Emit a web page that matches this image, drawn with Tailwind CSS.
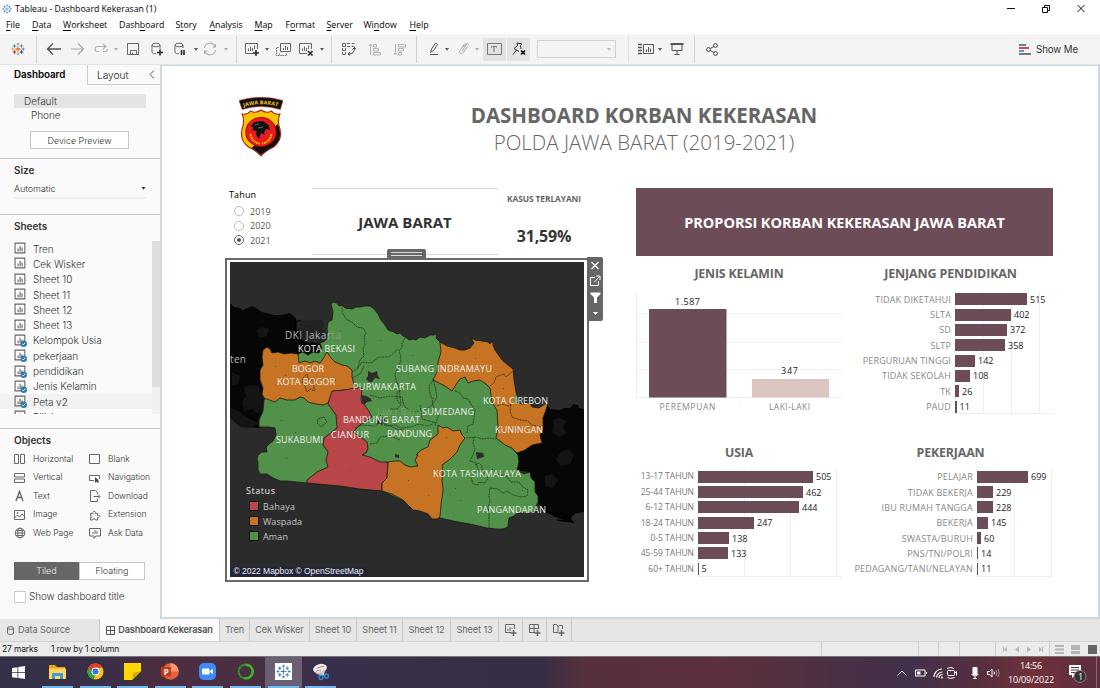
<!DOCTYPE html>
<html lang="id">
<head>
<meta charset="utf-8">
<title>Tableau - Dashboard Kekerasan (1)</title>
<script src="https://cdn.jsdelivr.net/npm/@tailwindcss/browser@4"></script>
</head>
<body class="w-[1100px] h-[688px] overflow-hidden bg-white font-['Open_Sans',sans-serif] text-[9px] leading-none text-black">
<svg width="0" height="0" class="hidden">
  <defs>
    <symbol id="sheet" viewBox="0 0 12 12"><path d="M1 1h9v9h-9zM3.800 8.500V6M5.600 8.500V3.500M7.400 8.500V5" fill="none" stroke="#666"/></symbol>
    <symbol id="sheetok" viewBox="0 0 12 12"><path d="M1 1h9v9h-9zM3.800 8.500V6M5.600 8.500V3.500M7.400 8.500V5" fill="none" stroke="#666"/><circle cx="9" cy="9" r="3" fill="#2f7ea3"/><path d="M7.500 9l1 1 2-2" fill="none" stroke="#fff" stroke-width=".8"/></symbol>
    <symbol id="caret" viewBox="0 0 4 3"><path d="M0 0h4L2 2.800z" fill="currentColor"/></symbol>
    <symbol id="tab" viewBox="0 0 16 16"><g fill="none"><path d="M8 5v6M5 8h6" stroke="#e8762c" stroke-width="1.500"/><path d="M4 2.500v4M2 4.500h4" stroke="#5b879b" stroke-width="1.200"/><path d="M12 2.500v4M10 4.500h4" stroke="#59879b"/><path d="M4 9.500v4M2 11.500h4" stroke="#c72035" stroke-width="1.200"/><path d="M12 9.500v4M10 11.500h4" stroke="#1f457e" stroke-width="1.200"/><path d="M8 .8v3M6.500 2.300h3" stroke="#7199a6"/><path d="M8 12.200v3M6.500 13.700h3" stroke="#7199a6"/><path d="M2 6.500v3M.5 8h3" stroke="#eb912c"/><path d="M14 6.500v3M12.500 8h3" stroke="#5c6692"/></g></symbol>
    <symbol id="tabblue" viewBox="0 0 16 16"><path d="M8 5v6M5 8h6M4 2.500v4M2 4.500h4M12 2.500v4M10 4.500h4M4 9.500v4M2 11.500h4M12 9.500v4M10 11.500h4M8 .8v3M6.500 2.300h3M8 12.200v3M6.500 13.700h3M2 6.500v3M.5 8h3M14 6.500v3M12.500 8h3" fill="none" stroke="#3f7fae"/></symbol>
  </defs>
</svg>

<!-- title bar -->
<header class="flex h-[18px] items-center pl-[2px]">
  <svg class="size-[10px]"><use href="#tabblue"/></svg>
  <span class="ml-[3px] text-[8.700px]">Tableau - Dashboard Kekerasan (1)</span>
  <svg class="ml-auto mr-[11px] h-[12px] w-[84px]" viewBox="0 0 84 12" fill="none" stroke="#111"><path d="M2 5.500h8"/><path d="M37.500 4.500h5v5h-5zM39.500 4.500v-2h5v5h-2M72.500 2l7 7M79.500 2l-7 7"/></svg>
</header>

<!-- menus -->
<nav class="flex h-[16px] pt-[3px] text-[8.800px] [&_u]:underline-offset-[1.500px]">
  <span class="ml-[6px] w-[26px]"><u>F</u>ile</span><span class="w-[31px]"><u>D</u>ata</span><span class="w-[56px]"><u>W</u>orksheet</span><span class="w-[56.500px]">Dash<u>b</u>oard</span><span class="w-[34px]">S<u>t</u>ory</span><span class="w-[45px]"><u>A</u>nalysis</span><span class="w-[31px]"><u>M</u>ap</span><span class="w-[41px]">F<u>o</u>rmat</span><span class="w-[37px]"><u>S</u>erver</span><span class="w-[46px]">Wi<u>n</u>dow</span><span><u>H</u>elp</span>
</nav>

<!-- toolbar -->
<div class="flex h-[31px] items-center border-b border-[#dfe4e8] bg-[#f4f4f4] text-[#555]">
  <svg class="ml-[11px] size-[14px] shrink-0"><use href="#tab"/></svg>
  <i class="ml-[11px] h-[27px] w-px bg-[#d0d0d0]"></i>
  <svg class="ml-[9px] h-[14px] w-[16px]" viewBox="0 0 16 14" fill="none" stroke="#555" stroke-width="1.300"><path d="M15 7H1.500M7 1.500L1.500 7 7 12.500"/></svg>
  <svg class="ml-[8px] h-[14px] w-[16px]" viewBox="0 0 16 14" fill="none" stroke="#aaa" stroke-width="1.200"><path d="M1 7h12.500M8 1.500L13.500 7 8 12.500"/></svg>
  <svg class="ml-[8px] h-[12px] w-[15px]" viewBox="0 0 15 12" fill="none" stroke="#b0b0b0" stroke-width="1.100"><path d="M5 8.500H3.500a2.500 2.500 0 010-5H11M9 1l3 2.500L9 6M9 8.500h2a2.500 2.500 0 002.500-2.500"/></svg>
  <svg class="ml-[5px] h-[3px] w-[4px] text-[#aaa]"><use href="#caret"/></svg>
  <svg class="ml-[8px] size-[14px]" viewBox="0 0 14 14" fill="none" stroke="#666"><path d="M1.500 1.500h11v11h-11zM4.500 12V8.500h6V12M6.500 10.500V12"/></svg>
  <svg class="ml-[10px] size-[14px]" viewBox="0 0 14 14" fill="none" stroke="#666"><ellipse cx="6" cy="3" rx="4" ry="1.800"/><path d="M2 3v7c0 1.200 2 1.800 4 1.800M10 3v4"/><path d="M10 7.500v6M7 10.500h6" stroke="#222" stroke-width="1.500"/></svg>
  <svg class="ml-[9px] size-[14px]" viewBox="0 0 14 14" fill="none" stroke="#666"><ellipse cx="6" cy="3" rx="4" ry="1.800"/><path d="M2 3v7c0 1.200 2 1.800 4 1.800M10 3v3"/><path d="M8.500 8v5M11 8v5" stroke="#222" stroke-width="1.600"/></svg>
  <svg class="ml-[7px] h-[3px] w-[4px]"><use href="#caret"/></svg>
  <svg class="ml-[5px] size-[14px]" viewBox="0 0 14 14" fill="none" stroke="#b0b0b0" stroke-width="1.100"><path d="M1.500 6A5.500 5.500 0 0112 4.500M12.500 8A5.500 5.500 0 012 9.500M12.500 2v3h-3M1.500 12V9h3"/></svg>
  <svg class="ml-[7px] h-[3px] w-[4px] text-[#aaa]"><use href="#caret"/></svg>
  <i class="ml-[8px] h-[27px] w-px bg-[#d0d0d0]"></i>
  <svg class="ml-[8px] size-[14px]" viewBox="0 0 14 14" fill="none" stroke="#666"><path d="M12.500 7V1.500h-12v10H8M3.500 9V6.500M5.500 9V4.500M7.500 9V6M9.500 7V3.500"/><path d="M11 8v6M8 11h6" stroke="#222" stroke-width="1.500"/></svg>
  <svg class="ml-[6px] h-[3px] w-[4px]"><use href="#caret"/></svg>
  <svg class="ml-[7px] size-[15px]" viewBox="0 0 15 15" fill="none" stroke="#666"><path d="M4.500 1.500h10v8h-10zM7.500 8V6M9.500 8V4M11.500 8V5"/><path d="M2.500 5.500h-2v8h10v-2M3.500 11.500v1" stroke-dasharray="1.500 .8"/></svg>
  <svg class="ml-[8px] size-[15px]" viewBox="0 0 15 15" fill="none" stroke="#666"><path d="M12.500 7V1.500h-12v10H8M3.500 9V6.500M5.500 9V4.500M7.500 9V6M9.500 7V3.500"/><path d="M9 9l4.500 4.500M13.500 9L9 13.500" stroke="#222" stroke-width="1.500"/></svg>
  <svg class="ml-[6px] h-[3px] w-[4px]"><use href="#caret"/></svg>
  <i class="ml-[7px] h-[27px] w-px bg-[#d0d0d0]"></i>
  <svg class="ml-[10px] size-[14px]" viewBox="0 0 14 14" fill="none" stroke="#666"><path d="M.5 1.500h3v3h-3zM5 1.500h3M9.500 1.500h3M5 4.500h3M9.500 4.500h3M.5 6v2.500h3V6M.5 10v2.500h3V10"/><path d="M12.500 6c0 4-2 6-6 6M10.500 7.500l2-2 1.500 2M8 10l-2 2 2 1.500" stroke="#444"/></svg>
  <svg class="ml-[12px] size-[13px]" viewBox="0 0 13 13" fill="none" stroke="#b5b5b5"><path d="M2.500 1v11M1 3l1.500-2L4 3M5.500 1.500h3v2.500h-3zM5.500 5.500h5V8h-5zM5.500 9.500h7V12h-7z"/></svg>
  <svg class="ml-[12px] size-[13px]" viewBox="0 0 13 13" fill="none" stroke="#b5b5b5"><path d="M2.500 1v11M1 10l1.500 2L4 10M5.500 1.500h7V4h-7zM5.500 5.500h5V8h-5zM5.500 9.500h3V12h-3z"/></svg>
  <i class="ml-[10px] h-[27px] w-px bg-[#d0d0d0]"></i>
  <svg class="ml-[12px] h-[14px] w-[11px]" viewBox="0 0 11 14" fill="none" stroke="#555"><path d="M1.500 10.500l1-3.500 4-6 2 1.500-4 6zM1 12.500h8"/></svg>
  <svg class="ml-[5px] h-[3px] w-[4px]"><use href="#caret"/></svg>
  <svg class="ml-[9px] h-[14px] w-[12px]" viewBox="0 0 12 14" fill="none" stroke="#aaa"><path d="M4 9.500l4-6c.8-1.400-.8-2.500-1.700-1.200L2 8.500c-1.500 2.300 1.500 4.500 3.200 2.200L9.500 4.500M5 5.500L8 2c1.500-1.500 3 0 2 1.500"/></svg>
  <svg class="ml-[5px] h-[3px] w-[4px] text-[#aaa]"><use href="#caret"/></svg>
  <span class="ml-[4px] flex h-[23px] w-[23px] items-center justify-center bg-[#e3e3e3]"><svg class="h-[12px] w-[15px]" viewBox="0 0 15 12" fill="none" stroke="#777"><path d="M.5 .5h14v11H.5zM4.500 4.500v-1h5v1M7 3.500V9"/></svg></span>
  <span class="ml-[1px] flex h-[23px] w-[23px] items-center justify-center bg-[#e3e3e3]"><svg class="size-[14px]" viewBox="0 0 14 14" fill="none" stroke="#333"><path d="M5 1l5 1-1.500 1.500L9 7M5 1l.5 2.500L2 6.500l5 3M4.500 8L1 12.500"/><path d="M9 8.500l4 4M13 8.500l-4 4" stroke="#000" stroke-width="1.600"/></svg></span>
  <span class="ml-[7px] flex h-[18px] w-[79px] items-center justify-end border border-[#d2d2d2] pr-[4px]"><svg class="h-[3px] w-[4px] text-[#bbb]"><use href="#caret"/></svg></span>
  <i class="ml-[12px] h-[27px] w-px bg-[#e0e0e0]"></i>
  <svg class="ml-[9px] h-[12px] w-[16px]" viewBox="0 0 16 12" fill="none" stroke="#555"><path d="M5.500 1.500h10v9h-10zM8.500 9V6.500M10.500 9V4M12.500 9V5.500"/><path d="M0 1.500h4M0 4.500h4M0 7.500h4M0 10.500h4" stroke-width="1.500"/></svg>
  <svg class="ml-[4px] h-[3px] w-[4px]"><use href="#caret"/></svg>
  <svg class="ml-[8px] size-[14px]" viewBox="0 0 14 14" fill="none" stroke="#555"><path d="M.5 2h13" stroke-width="2"/><path d="M2 3v5.500h10V3M7 8.500v4M4.500 12.500h5"/></svg>
  <i class="ml-[10px] h-[27px] w-px bg-[#d0d0d0]"></i>
  <svg class="ml-[11px] size-[13px]" viewBox="0 0 13 13" fill="none" stroke="#444"><circle cx="2.500" cy="6.500" r="1.900"/><circle cx="9.500" cy="2.500" r="1.900"/><circle cx="9.500" cy="10.500" r="1.900"/><path d="M4.200 5.500l3.700-2M4.200 7.500l3.700 2"/></svg>
  <svg class="ml-auto h-[11px] w-[12px]" viewBox="0 0 12 11"><path d="M0 1h7" stroke="#5b879b" stroke-width="2"/><path d="M0 4h10" stroke="#c84a5c" stroke-width="2"/><path d="M0 7h5" stroke="#5b9bd5" stroke-width="2"/><path d="M0 10h12" stroke="#777" stroke-width="2"/></svg>
  <span class="mr-[22px] ml-[5px] pt-px font-[Inter] text-[9.700px] tracking-[-0.100px] text-[#333]">Show Me</span>
</div>

<!-- work area -->
<main class="flex h-[554px]">
  <aside class="flex w-[160px] shrink-0 flex-col bg-[#fafafa] font-[Inter,sans-serif] text-[9.500px] font-light tracking-[-0.050px] text-[#333]">
    <div class="flex h-[20px]">
      <b class="w-[87px] pt-[5px] pl-[14px] text-[9.800px] font-semibold text-black">Dashboard</b>
      <span class="flex w-[73px] border-b border-l border-[#ccc] pt-[5px] pl-[9px] text-[10.200px] text-[#222]">Layout<svg class="mr-[3px] ml-auto size-[9px]" viewBox="0 0 9 9" fill="none" stroke="#555"><path d="M6 .5l-4 4 4 4"/></svg></span>
    </div>
    <div class="h-[74px] border-b border-[#c8c8c8] px-[14px] pt-[9px]">
      <div class="flex h-[14px] items-center bg-[#e4e4e4] pl-[10px] text-[10px]">Default</div>
      <div class="flex h-[14px] items-center pl-[17px] text-[10px]">Phone</div>
      <div class="mt-[9px] ml-[16px] flex h-[18px] w-[99px] items-center justify-center border border-[#c8c8c8] bg-white text-[9px] text-[#333]">Device Preview</div>
    </div>
    <div class="h-[56px] border-b border-[#c8c8c8] px-[14px] pt-[6px]">
      <b class="block text-[10px] font-semibold text-[#333]">Size</b>
      <div class="mt-[5px] flex h-[19px] items-center justify-between border-b-2 border-[#eee] text-[9px]">Automatic<svg class="h-[3px] w-[5px]"><use href="#caret"/></svg></div>
    </div>
    <div class="flex h-[26px] pt-[6px] pl-[14px]"><b class="text-[10px] font-semibold text-[#333]">Sheets</b></div>
    <div class="flex h-[173px] overflow-hidden">
      <div class="w-[152px] overflow-hidden text-[10px] [&>div]:flex [&>div]:h-[15.300px] [&>div]:items-center [&>div]:gap-[6px] [&>div]:pl-[14px] [&_svg]:size-[13px]">
        <div><svg><use href="#sheet"/></svg>Tren</div>
        <div><svg><use href="#sheet"/></svg>Cek Wisker</div>
        <div><svg><use href="#sheet"/></svg>Sheet 10</div>
        <div><svg><use href="#sheet"/></svg>Sheet 11</div>
        <div><svg><use href="#sheet"/></svg>Sheet 12</div>
        <div><svg><use href="#sheet"/></svg>Sheet 13</div>
        <div><svg><use href="#sheetok"/></svg>Kelompok Usia</div>
        <div><svg><use href="#sheetok"/></svg>pekerjaan</div>
        <div><svg><use href="#sheetok"/></svg>pendidikan</div>
        <div><svg><use href="#sheetok"/></svg>Jenis Kelamin</div>
        <div class="bg-[#f2f2f2]"><svg><use href="#sheetok"/></svg>Peta v2</div>
        <div><svg><use href="#sheet"/></svg>Pilisi...</div>
      </div>
      <div class="w-[8px] bg-[#f0f0f0]"><div class="h-[146px] bg-[#dedede]"></div></div>
    </div>
    <div class="mt-[14px] border-t border-[#c8c8c8] px-[14px] pt-[6px]">
      <b class="block text-[10px] font-semibold text-[#333]">Objects</b>
      <div class="mt-[5px] grid grid-cols-[75px_1fr] text-[8.600px] text-[#333] [&>span]:flex [&>span]:h-[18.500px] [&>span]:items-center [&>span]:gap-[7px] [&>span]:whitespace-nowrap [&_svg]:size-[12px] [&_svg]:shrink-0 [&_svg]:fill-none [&_svg]:stroke-[#666]">
        <span><svg viewBox="0 0 12 12"><path d="M.5 1.500h4v9h-4zM6.500 1.500h4v9h-4z"/></svg>Horizontal</span>
        <span><svg viewBox="0 0 12 12"><path d="M.5 1.500h10v9H.5z"/></svg>Blank</span>
        <span><svg viewBox="0 0 12 12"><path d="M.5 1.500h10v3.500H.5zM.5 7h10v3.500H.5z"/></svg>Vertical</span>
        <span><svg viewBox="0 0 12 12"><path d="M5 8.500H.5v-5h10V7"/><path d="M6 5v6l1.500-1.500L9 11l1-1-1.500-1.500H10z" fill="#444" stroke="none"/></svg>Navigation</span>
        <span><svg viewBox="0 0 12 12"><path d="M2 11L5.500 1.500 9 11M3.200 7.500h4.600" stroke-width="1.400"/></svg>Text</span>
        <span><svg viewBox="0 0 12 12"><path d="M8.500 4V2.500l-2-2h-5v11h7V9M4.500 6.500h6M9 4.500l2 2-2 2"/></svg>Download</span>
        <span><svg viewBox="0 0 12 12"><path d="M.5 1.500h10v9H.5zM.5 9l3-3 2 2 2.500-3 2.500 2"/><circle cx="3.500" cy="4" r=".6"/></svg>Image</span>
        <span><svg viewBox="0 0 12 12"><path d="M3.500 11H1.500V8.500c2 .5 2-2 0-1.500V4.500H4C3 2 7 1 6.500 4.500h2v2c3-.8 3 2.300 0 2V11h-2c0-1.800-3-1.800-3 0z"/></svg>Extension</span>
        <span><svg viewBox="0 0 12 12"><circle cx="6" cy="6" r="4.800"/><ellipse cx="6" cy="6" rx="2.200" ry="4.800"/><path d="M1.200 6h9.600M2 3.500h8M2 8.500h8"/></svg>Web Page</span>
        <span><svg viewBox="0 0 12 12"><path d="M.5 1.500h11v7.500H7l-2 2.500V9H.5zM4 7V5M6 7V3M8 7V4"/></svg>Ask Data</span>
      </div>
      <div class="mt-[19px] flex h-[18px] w-[131px] text-[9px]">
        <span class="flex w-[65px] items-center justify-center bg-[#666] text-[#eee]">Tiled</span>
        <span class="flex flex-1 items-center justify-center border border-[#c8c8c8] bg-white">Floating</span>
      </div>
      <div class="mt-[11px] flex h-[12px] items-center gap-[3px] text-[9.900px] whitespace-nowrap"><i class="size-[12px] border border-[#ccc] bg-white"></i>Show dashboard title</div>
    </div>
  </aside>

  <section class="flex flex-1 flex-col border-t border-r-2 border-b-2 border-l-2 border-[#ccd9e2] bg-white">
    <div class="flex h-[122px] shrink-0 pt-[31px] pl-[77px]">
      <svg class="h-[60px] w-[44px]" viewBox="0 0 42 60" preserveAspectRatio="none">
        <path d="M0 3.500Q21-3 42 3.500L39.500 12.500Q21 6.500 3 12.500z" fill="#111" stroke="#c33" stroke-width=".6"/>
        <path id="arc" d="M4.500 10Q21 4.500 39 10" fill="none"/>
        <text font-family="Open Sans" font-weight="700" font-size="5.200" fill="#f4c81e"><textPath href="#arc" textLength="33">JAWA BARAT</textPath></text>
        <path d="M3 17Q8 18 11 14Q16 17 21 13Q26 17 31 14Q34 18 39 17Q37 22 38 28Q43 42 33 50Q25 54 21 59Q17 54 9 50Q-1 42 4 28Q5 22 3 17z" fill="#f6c300" stroke="#b01818"/>
        <path d="M38 30Q42 42 33 49.500Q25 54 21 58Q17 54 12 51L37 27z" fill="#111"/>
        <circle cx="21" cy="35" r="14.500" fill="#e81c1c" stroke="#a00"/>
        <path d="M11 37Q12 45 20 46.500M31 37Q30 45 22 46.500" fill="none" stroke="#f6b800" stroke-width="1.800" stroke-dasharray="2 .6"/>
        <path d="M11 29l4-4 8-1 5 4 2 5-4-1-2 3 1 3-4-2-2 6-3-5 1-3-5-1 2-2z" fill="#111"/><path d="M15 28l4-1M18 31l5-1" stroke="#888" stroke-width=".7"/>
      </svg>
      <div class="ml-[161px] w-[400px] pt-[6px] text-center text-[#666]">
        <h1 class="text-[20.500px] leading-[25px] font-bold tracking-[-0.060px]">DASHBOARD KORBAN KEKERASAN</h1>
        <h2 class="text-[20.500px] leading-[28px] font-light">POLDA JAWA BARAT (2019-2021)</h2>
      </div>
    </div>

    <div class="flex">
      <div class="ml-[63px] w-[378px]">
        <div class="flex h-[70px]">
          <div class="w-[87px] pt-[2px] pl-[4px] text-[9px]">
            <div class="tracking-[0.150px]">Tahun</div>
            <div class="mt-[5px] flex flex-col pl-[5px] text-[#555] [&>label]:flex [&>label]:h-[14.500px] [&>label]:items-center [&>label]:gap-[6px] [&_i]:size-[10px] [&_i]:rounded-full [&_i]:border [&_i]:bg-white">
              <label><i class="border-[#bbb]"></i>2019</label>
              <label><i class="border-[#bbb]"></i>2020</label>
              <label><i class="flex items-center justify-center border-[#666]"><b class="size-[4px] rounded-full bg-[#555]"></b></i>2021</label>
            </div>
          </div>
          <div class="flex h-[67px] w-[186px] items-center justify-center border-y border-[#d8d8d8] pt-[2px] text-[15px] font-bold text-[#333]">JAWA BARAT</div>
          <div class="w-[92px] pt-[7px] text-center font-bold"><div class="text-[8.400px] tracking-[-0.080px] text-[#666]">KASUS TERLAYANI</div><div class="mt-[25px] text-[16px] tracking-[-0.200px] text-[#333]">31,59%</div></div>
        </div>
        <div class="relative flex items-start">
          <div class="absolute top-[-9px] left-[162px] flex h-[9px] w-[39px] flex-col justify-center gap-[2px] rounded-t-[2px] bg-[#666] px-[4px]"><i class="h-px bg-[#ddd]"></i><i class="h-px bg-[#ddd]"></i></div>
          <div class="h-[324px] w-[364px] border-2 border-[#6a6a6a] bg-white p-[2px] pl-[3px]">
            <svg class="h-[315px] w-[354px]" viewBox="230 262 354 315" font-family="Open Sans" font-size="9">
              <path d="M230 262h354v315H230z" fill="#2b2b2b"/>
              <g fill="#060606">
                <path d="M230 303L234 307 240 308 243 310 252 306 256 308 262 312 275 315 281 315 290 313 296 318 297 330 303 340 322 344 325 360 300 400 260 428 240 427 237 422 230 418z"/>
                <path d="M540 402L548 406 550 409 560 410 564 408 570 408 574 404 578 405 579 408 584 409V512L573 514 570 522 555 517 545 512 538 503 530 472 515 470 516 450z"/>
              </g>
              <g fill="#141414"><path d="M244 388l6-3 9 1 2 8 8 3-4 6 2 7-9 4-6-5-8 2-2-9 4-6zM232 372l8 4-2 8-6 2zM256 330l5-3 8 2-2 7-7 2zM230 408l8 3 12 8 9 4-6 4-13 0-10-9zM553 420l6-2 7 3-3 7 4 5-8 4-7-5 2-6zM561 452l8-3 5 6-4 9-9 2-5-7zM545 476l7-2 6 6-5 8-8-2z"/></g>
              <path d="M299 321l23-1 2 2-1 20-5 2-3-5-5 5-6-4-6-9z" fill="#222"/>
              <path d="M301 320l-5 2-1 10 4 9 6 5M545 512l8 1 6 0 8 3 6 6-16-2M560 512l8 6 6-4" fill="none" stroke="#000" stroke-width="1.300"/>
              <g stroke="#151a10" stroke-width=".8" stroke-linejoin="round">
                <path fill="#529149" d="M331 304L333 302 337 303 339 306 342 305 345 308 352 309 356 307 360 307 365 306 370 306 374 309 378 314 381 320 385 325 388 330 394 332 397 334 400 333 403 336 407 338 409 340 413 339 416 340 420 337 425 338 430 335 434 335 437 334 436 338 440 342 460 370 500 385 512 448 518 455 519 462 517 470 524 474 530 472 531 478 535 482 535 492 538 496 538 502 536 506 535 511 527 514 524 513 517 513 514 516 509 518 508 527 503 529 497 529 487 528 470 524 453 521 440 518 382 491 307 483 287 481 280 481 273 478 267 474 260 474 258 470 258 463 257 459 258 455 262 452 267 452 266 447 269 444 273 441 276 435 275 428 268 427 259 427 259 420 263 411 264 400 298 354 303 352 308 355 313 352 319 353 322 348 320 343 325 341 328 337 327 329 328 322 332 320 333 312z"/>
                <path fill="#c67424" d="M263 350L267 347 270 349 272 353 278 352 284 354 291 353 298 354 299 363 305 361 310 363 315 361 320 363 323 359 327 352 331 358 335 362 342 365 347 366 352 370 352 377 355 388 350 390 344 390 332 392 330 398 328 403 323 405 316 404 308 402 304 398 300 397 295 400 287 400 280 398 275 402 264 398 262 394 263 388 260 380 260 370 263 365 262 357z"/>
                <path fill="#b94749" d="M332 391L344 390 355 388 362 388 361 400 368 410 372 417 360 425 353 432 362 438 367 442 368 448 366 453 362 455 370 457 380 462 388 462 387 478 382 483 382 491 360 489 340 486 307 483 307 480 317 472 328 467 326 460 328 452 323 445 324 438 328 435 333 431 337 428 336 415 328 404z"/>
                <path fill="#c67424" d="M388 462L394 461 400 461 405 465 410 467 418 466 415 460 418 455 416 455 421 450 428 447 430 440 438 434 438 425 443 428 447 427 453 431 460 430 462 435 465 438 460 445 457 452 449 460 442 465 443 473 442 480 443 490 441 505 440 516 438 519 432 519 428 514 420 511 413 510 403 500 392 494 382 491 382 483 387 478z"/>
                <path fill="#c67424" d="M440 342L447 346 455 348 460 350 465 350 470 348 474 343 471 338 475 340 482 341 488 342 490 344 493 341 493 345 495 350 502 360 508 365 513 369 514 380 516 392 517 398 515 402 522 404 530 403 532 407 539 408 543 405 546 402 548 403 546 410 543 418 543 430 540 435 542 443 532 445 525 450 517 453 512 448 505 445 500 441 496 438 498 428 497 410 492 402 490 388 486 384 480 380 473 381 468 383 465 377 460 379 457 383 452 391 445 386 433 380 438 370 438 362 441 352z"/>
              </g>
              <path fill="#2b2b2b" d="M531 398h17l-1 5-4 3-5 2-6-2z"/>
              <path fill="#529149" d="M514 396l3-1 1 7-3 2z"/>
              <g fill="#2b2d29"><path d="M368 371l4 2 5-2 1 5 2 3-5-1-3 4-3 0-3-3 2-3zM361 395l5 1 4 2 2 3-5 1-3 3-3-2 1-4zM378 418l3 2 3-3 1 4-2 1-1 4-2-3-3 1zM476 452l7 1 1 4-7 2zM395 454l4 1v3l-4-1z"/></g>
              <g fill="none" stroke="#1b2a14" stroke-width=".7" stroke-dasharray="2 .7">
                <path d="M342 305l0 7 4 7 7 4 4 4 6 1 3 5-2 4 1 8-2 3 1 8-4 4-3 9-5 3M405 338l-3 5 0 4-3 4 2 6-1 6-5 11 1 6 3 7 1 10 1 7M358 368l4-6 9 1 8-6 10 0 9-8M352 378l8-4 4-8M401 388l-4 5 0 7 4 5-4 4-7 0M370 395l10 3 10-2 12 1 2 9 6 5 12 0 6-3 4-3 5-8-2-10-2-9M433 380l-4 6 1 8 2 4 1 8 6 8-4 12M455 391l5 2 3 5 5 1 3 5 4 6-1 8-1 6-5 2-1 7M466 438l10-1 6 2 7-1 7 1M474 437l-1 6 2 6-2 6-3 6 6 2 2 6 2 4M420 405l2 14 14 4M355 428l6-3 14 1 6-4 9 4 9 4 5-1M370 444l7-1 3-6 10-1 10 4M380 415l4 4 1 7 10-1 6 3 10-1 8-3 8 2 6-2M475 465l4-2 3 3 0 6 4 2 2 5-3 4-6-1-1 3-5-1-2-7-3-5M490 488l8 1 5 4 4-2 6 4 8 2 6-1 1-6-5-3-4-5-8 0-4-5-9-3-6-5M490 488l-1 8 1 5-2 6 1 7 0 14M490 386l4-3 2-6 8-3 2 3 7-6M497 406l5-2 6 2 3-1M511 404l-1 6 2 7 8 3 8 1 4 4 10 2"/>
                <path d="M318 419l6-2 3 5-6 5-4-4z"/>
                <path stroke="#2a1c0c" d="M303 378l4-4 1 5 3 1 5 0-3 4 2 7-5-2-3 3-2-6-3-3z"/>
              </g>
              <g fill="#243a1a" fill-opacity=".6"><path d="M281 420h1v1h-1zM295 432h1v1h-1zM302 447h1v1h-1zM286 458h1v1h-1zM340 330h1v1h-1zM352 345h1v1h-1zM380 340h1v1h-1zM412 355h1v1h-1zM423 365h1v1h-1zM458 362h1v1h-1zM475 358h1v1h-1zM487 366h1v1h-1zM503 388h1v1h-1zM521 431h1v1h-1zM460 500h1v1h-1zM455 488h1v1h-1zM428 495h1v1h-1zM408 480h1v1h-1zM350 470h1v1h-1zM285 375h1v1h-1zM275 366h1v1h-1zM335 380h1v1h-1zM433 398h1v1h-1zM452 408h1v1h-1zM446 437h1v1h-1zM522 490h1v1h-1z"/></g>
              <g fill="#b4b4b4"><text x="285" y="339" textLength="56" font-size="10">DKI Jakar<tspan fill="#8a9a86">ta</tspan></text><text x="230" y="363" textLength="16" font-size="10">ten</text><text x="377" y="415" textLength="48" fill="#74a36c" font-size="9.500">Jawa Barat</text></g>
              <g fill="#eee">
                <text x="298" y="352" textLength="57">KOTA BEKASI</text><text x="292" y="371.500" textLength="32">BOGOR</text><text x="277" y="385" textLength="58">KOTA BOGOR</text><text x="353" y="389.500" textLength="63">PURWAKARTA</text><text x="396" y="371.500" textLength="38">SUBANG</text><text x="437" y="372" textLength="55">INDRAMAYU</text><text x="483" y="403.500" textLength="65">KOTA CIREBON</text><text x="422" y="415" textLength="52">SUMEDANG</text><text x="343" y="422.500" textLength="77">BANDUNG BARAT</text><text x="331" y="438" textLength="38">CIANJUR</text><text x="387" y="436.500" textLength="45">BANDUNG</text><text x="276" y="442.500" textLength="47">SUKABUMI</text><text x="495" y="432.500" textLength="48">KUNINGAN</text><text x="433" y="477" textLength="88">KOTA TASIKMALAYA</text><text x="477" y="513" textLength="69">PANGANDARAN</text>
                <text x="246" y="494" textLength="29">Status</text>
              </g>
              <path d="M249.500 501.500h9v9h-9z" fill="#b94749" stroke="#111"/><path d="M249.500 516.500h9v9h-9z" fill="#c67424" stroke="#111"/><path d="M249.500 531.500h9v9h-9z" fill="#529149" stroke="#111"/>
              <g fill="#c4c4c4"><text x="263" y="509.500" textLength="32">Bahaya</text><text x="263" y="525" textLength="39">Waspada</text><text x="263" y="540" textLength="25">Aman</text></g>
              <path d="M231 567h135v9H231z" fill="#20243a"/>
              <text x="233.500" y="574" textLength="130" font-family="Liberation Sans" font-size="8.500" fill="#eee">© 2022 Mapbox © OpenStreetMap</text>
            </svg>
          </div>
          <svg class="mt-[-1px] ml-[-2px] h-[64px] w-[16px]" viewBox="0 0 16 64" fill="none" stroke="#fff"><path d="M0 0h14q2 0 2 2v60q0 2-2 2H0z" fill="#666" stroke="none"/><path d="M4.500 5l7 7M11.500 5l-7 7" stroke-width="1.200"/><path d="M8 20.500H3.500v8h8V24M7.500 25l5-5.500M9 19h4v4"/><path d="M3.500 35.500h10v1.500l-3.500 3.500v5.500h-3v-5.500l-3.500-3.500z" fill="#fff" stroke="none"/><path d="M6 55h5l-2.500 3z" fill="#fff" stroke="none"/></svg>
        </div>
      </div>

      <div class="ml-[33px] w-[417px]">
        <div class="flex h-[68px] items-center justify-center bg-[#6c4c56] pt-[2px] text-[14.500px] font-bold tracking-[-0.040px] text-white">PROPORSI KORBAN KEKERASAN JAWA BARAT</div>
        <div class="flex">
          <div class="w-[206px]">
            <h3 class="h-[36px] pt-[12px] text-center text-[12.300px] font-bold tracking-[-0.150px] text-[#666]">JENIS KELAMIN</h3>
            <svg class="h-[122px] w-[206px]" viewBox="636 292 206 122" font-family="Open Sans" font-size="9"><path d="M636.500 292v106M636 313.500h206M636 342.500h206M636 369.500h206M636 397.500h206M739.500 398v4" stroke="#efefef"/><path d="M649 309h77.500v88.500H649z" fill="#6c4c56"/><path d="M752 379h77v18.500h-77z" fill="#ddc6c1"/><g fill="#222"><text x="675" y="304.500" textLength="25">1.587</text><text x="781" y="374" textLength="17">347</text></g><g fill="#888" font-size="8.500"><text x="659.500" y="410" textLength="56">PEREMPUAN</text><text x="769" y="410" textLength="41">LAKI-LAKI</text></g></svg>
          </div>
          <div class="w-[211px]">
            <h3 class="h-[35px] pt-[12px] pl-[6px] text-center text-[12.500px] font-bold tracking-[-0.150px] text-[#666]">JENJANG PENDIDIKAN</h3>
            <div class="ml-[113px] h-[123px] w-[98px] border-b border-[#eee] bg-[linear-gradient(90deg,#eee_1px,transparent_1px)] bg-[length:28px_100%] pt-[0.500px] text-[9px] text-[#222] [&>div]:ml-[-113px] [&>div]:flex [&>div]:h-[15.360px] [&>div]:items-center [&_b]:mr-[3px] [&_b]:h-[12px] [&_b]:bg-[#6c4c56] [&_span]:mr-[4px] [&_span]:w-[109px] [&_span]:text-right [&_span]:text-[9px] [&_span]:tracking-[0.150px] [&_span]:text-[#888] [&_span]:whitespace-nowrap">
              <div><span>TIDAK DIKETAHUI</span><b style="width:72px"></b>515</div>
              <div><span>SLTA</span><b style="width:56px"></b>402</div>
              <div><span>SD</span><b style="width:52px"></b>372</div>
              <div><span>SLTP</span><b style="width:50px"></b>358</div>
              <div><span>PERGURUAN TINGGI</span><b style="width:20px"></b>142</div>
              <div><span>TIDAK SEKOLAH</span><b style="width:15px"></b>108</div>
              <div><span>TK</span><b style="width:4px"></b>26</div>
              <div><span>PAUD</span><b style="width:1.500px"></b>11</div>
            </div>
          </div>
        </div>
        <div class="mt-[33px] flex text-[9px] text-[#222]">
          <div class="w-[206px]">
            <h3 class="h-[22px] text-center text-[12.300px] font-bold tracking-[-0.150px] text-[#666]">USIA</h3>
            <div class="ml-[62px] h-[108px] border-b border-[#eee] bg-[linear-gradient(90deg,#eee_1px,transparent_1px)] bg-[length:46px_100%] [&>div]:ml-[-62px] [&>div]:flex [&>div]:h-[15.360px] [&>div]:items-center [&_b]:mr-[3px] [&_b]:h-[12px] [&_b]:bg-[#6c4c56] [&_span]:mr-[4px] [&_span]:w-[58px] [&_span]:text-right [&_span]:text-[8.500px] [&_span]:text-[#777] [&_span]:whitespace-nowrap">
              <div><span>13-17 TAHUN</span><b style="width:115px"></b>505</div>
              <div><span>25-44 TAHUN</span><b style="width:105px"></b>462</div>
              <div><span>6-12 TAHUN</span><b style="width:101px"></b>444</div>
              <div><span>18-24 TAHUN</span><b style="width:56px"></b>247</div>
              <div><span>0-5 TAHUN</span><b style="width:31px"></b>138</div>
              <div><span>45-59 TAHUN</span><b style="width:30px"></b>133</div>
              <div><span>60+ TAHUN</span><b style="width:0.500px"></b>5</div>
            </div>
          </div>
          <div class="w-[211px]">
            <h3 class="h-[22px] pl-[6px] text-center text-[12.400px] font-bold tracking-[-0.150px] text-[#666]">PEKERJAAN</h3>
            <div class="ml-[135px] h-[108px] w-[76px] border-b border-[#eee] bg-[linear-gradient(90deg,#eee_1px,transparent_1px)] bg-[length:37px_100%] [&>div]:ml-[-135px] [&>div]:flex [&>div]:h-[15.360px] [&>div]:items-center [&_b]:mr-[3px] [&_b]:h-[12px] [&_b]:bg-[#6c4c56] [&_span]:mr-[4px] [&_span]:w-[131px] [&_span]:text-right [&_span]:text-[9px] [&_span]:tracking-[0.200px] [&_span]:text-[#888] [&_span]:whitespace-nowrap">
              <div><span>PELAJAR</span><b style="width:51px"></b>699</div>
              <div><span>TIDAK BEKERJA</span><b style="width:16px"></b>229</div>
              <div><span>IBU RUMAH TANGGA</span><b style="width:16px"></b>228</div>
              <div><span>BEKERJA</span><b style="width:11px"></b>145</div>
              <div><span>SWASTA/BURUH</span><b style="width:4px"></b>60</div>
              <div><span>PNS/TNI/POLRI</span><b style="width:1px"></b>14</div>
              <div><span>PEDAGANG/TANI/NELAYAN</span><b style="width:1px"></b>11</div>
            </div>
          </div>
        </div>
      </div>
    </div>
  </section>
</main>

<!-- sheet tabs -->
<div class="flex h-[23px] border-b border-[#d2d2d2] bg-[#e6e6e6] font-[Inter,sans-serif] text-[9.200px] tracking-[-0.100px] whitespace-nowrap text-[#666] [&>span]:flex [&>span]:items-center [&>span]:justify-center [&>span]:border-r [&>span]:border-[#c6c6c6]">
  <span class="w-[100px] gap-[4px] pr-[22px]"><svg class="h-[9px] w-[7px]" viewBox="0 0 7 9" fill="none" stroke="#666"><ellipse cx="3.500" cy="2" rx="3" ry="1.400"/><path d="M.5 2v5c0 2 6 2 6 0V2"/></svg>Data Source</span>
  <span class="w-[120px] gap-[3px] bg-[#fafafa] font-semibold tracking-[-0.150px] text-[#555]"><svg class="size-[9px] shrink-0" viewBox="0 0 9 9" fill="none" stroke="#555"><path d="M.5 .5h8v8h-8zM4.500 .5v8M.5 4.500h8"/></svg>Dashboard Kekerasan</span>
  <span class="w-[30px]">Tren</span><span class="w-[60px]">Cek Wisker</span><span class="w-[47px]">Sheet 10</span><span class="w-[46px]">Sheet 11</span><span class="w-[48px]">Sheet 12</span><span class="w-[48px]">Sheet 13</span>
  <span class="w-[24px]"><svg class="size-[12px]" viewBox="0 0 12 12" fill="none" stroke="#666"><path d="M9.500 5V.5h-9v8H6M3 7V5M5 7V3M7 5V4"/><path d="M8.500 6v6M5.500 9h6" stroke-width="1.500"/></svg></span>
  <span class="w-[24px]"><svg class="size-[12px]" viewBox="0 0 12 12" fill="none" stroke="#666"><path d="M9.500 5V.5h-9v8H6M5 .5v8M.5 4.500h9"/><path d="M8.500 6v6M5.500 9h6" stroke-width="1.500"/></svg></span>
  <span class="w-[25px]"><svg class="size-[12px]" viewBox="0 0 12 12" fill="none" stroke="#666"><path d="M9.500 5V1.500H7L5 2.500 3.500 .5h-3v8h4L5 9V2.500"/><path d="M8.500 6v6M5.500 9h6" stroke-width="1.500"/></svg></span>
</div>

<!-- status bar -->
<div class="flex h-[15px] items-center border-b border-[#777] bg-[#ebebeb] font-[Inter,sans-serif] text-[8.500px] tracking-[-0.150px] text-[#222]">
  <span class="ml-[2px] w-[49px]">27 marks</span><span>1 row by 1 column</span>
  <div class="ml-auto flex h-full items-center [&>i]:h-full [&>i]:border-l [&>i]:border-[#ccc]">
    <i class="w-[97px]"></i><i class="w-[20px]"></i><i class="w-[21px]"></i><i class="w-[36px]"></i><i class="w-[7px]"></i>
    <svg class="h-[7px] w-[47px]" viewBox="0 0 47 7" fill="#b5b5b5"><path d="M1 1h1v5H1zM5 1v5L2 3.500zM17 .5v6L13 3.500zM25 .5v6l4-3zM37 1v5l3-2.500zM40 1h1v5h-1z"/></svg>
    <i class="w-[6px]"></i>
    <svg class="mr-[3px] h-[9px] w-[42px]" viewBox="0 0 42 9"><path d="M0 1h9M0 4.500h9M0 8h9" stroke="#b5b5b5" stroke-width="2"/><path d="M16 0h9v5h-9zM16 6h9v3h-9z" fill="#b5b5b5"/><path d="M33 0h9v9h-9z" fill="#666"/></svg>
  </div>
</div>

<!-- taskbar -->
<footer class="flex h-[31px] items-center bg-[linear-gradient(90deg,#352f48_0%,#372f47_9%,#4c2d40_14%,#4a2f42_22%,#38304a_30%,#352e45_49%,#56303d_53%,#5c303c_66%,#4a3045_76%,#42304a_83%,#552f40_89%,#70303a_94%,#5c2e40_100%)] text-white [&>span]:mr-[6.600px] [&>span]:flex [&>span]:h-full [&>span]:w-[31px] [&>span]:items-center [&>span]:justify-center [&>span]:border-b-2 [&>span]:border-[#76b9ed]">
  <svg class="mr-[17px] ml-[12px] size-[13px]" viewBox="0 0 13 13" fill="#fff"><path d="M0 2l5.500-.8v5H0zM6.300 1L13 0v6.200H6.300zM0 7h5.500v5L0 11.200zM6.300 7H13v6l-6.700-1z"/></svg>
  <span><svg class="h-[16px] w-[17px]" viewBox="0 0 17 16"><path d="M0 1h6l2 2h8v11H0z" fill="#e8a317"/><path d="M0 4.500h17V15H0z" fill="#ffd75e"/><path d="M3 15V9h11v6h-3v-3H6v3z" fill="#3c9bd8"/></svg></span>
  <span><svg class="size-[17px]" viewBox="0 0 18 18"><circle cx="9" cy="9" r="8.500" fill="#fbc116"/><path d="M1.600 4.800A8.500 8.500 0 0116.500 5H9L5.500 11z" fill="#e33b2e"/><path d="M1.600 4.800l4 6.500L9 13l-2 4.300A8.500 8.500 0 011.600 4.800z" fill="#2ca14c"/><circle cx="9" cy="9" r="4.200" fill="#fff"/><circle cx="9" cy="9" r="3.200" fill="#2f7de1"/></svg></span>
  <span><svg class="size-[17px]" viewBox="0 0 16 16"><path d="M0 0h16v9l-7 7H0z" fill="#ffd800"/><path d="M16 8v8H8l1-6z" fill="#333"/><path d="M16 8l-7 1-1 7z" fill="#d9a900"/></svg></span>
  <span><svg class="h-[17px] w-[18px]" viewBox="0 0 18 17"><circle cx="9.500" cy="8.500" r="8.300" fill="#e8603c"/><path d="M9.500 .2a8.300 8.300 0 018.300 8.300H9.500z" fill="#ff9574"/><path d="M0 4h10v9.500H0z" fill="#c13b1b"/><text x="2.800" y="11.500" font-family="Open Sans" font-weight="700" font-size="8" fill="#fff">P</text></svg></span>
  <span><svg class="size-[17px]" viewBox="0 0 17 17"><rect width="17" height="17" rx="5" fill="#3d8bfa"/><rect x="3" y="5.500" width="7.500" height="6" rx="1.200" fill="#fff"/><path d="M11 8l3-2v5l-3-2z" fill="#fff"/></svg></span>
  <span><svg class="size-[17px]" viewBox="0 0 17 17" fill="none"><circle cx="8.500" cy="8.500" r="6.800" stroke="#2b9a2a" stroke-width="2" stroke-dasharray="3 .4"/><path d="M8.500 1.700A6.800 6.800 0 117 15" stroke="#43b02a" stroke-width="2.400"/></svg></span>
  <span class="shadow-[-3px_0_0_#6b5f74,3px_0_0_#6b5f74] bg-[#6b5f74]"><svg class="size-[17px] bg-white p-[1px]" viewBox="0 0 16 16"><use href="#tabblue"/></svg></span>
  <span><svg class="size-[18px]" viewBox="0 0 18 18" fill="none"><ellipse cx="8" cy="5.500" rx="7" ry="4.500" fill="#eee" transform="rotate(-15 8 5.500)"/><path d="M2 9q5 3 12-3l-2 5q-5 3-10-2z" fill="#c9b0b0"/><path d="M5 5l7-2M4 8l5-1" stroke="#d66"/><path d="M7 7l6 6M12 6l-2 7" stroke="#ccc" stroke-width="1.200"/><circle cx="9" cy="14.500" r="2" stroke="#2b8bd0" stroke-width="1.300"/><circle cx="14.500" cy="13" r="2" stroke="#2b8bd0" stroke-width="1.300"/></svg></span>
  <div class="ml-auto flex h-full items-center">
    <svg class="h-[14px] w-[104px]" viewBox="0 0 104 14" fill="none" stroke="#fff"><path d="M1.500 9.500L6 5l4.500 4.500"/><path d="M19.500 4h9.500v6h-9.500zM30.500 6v2"/><path d="M21 5.500h3.500v3H21z" fill="#fff" stroke="none"/><path d="M38 11A8 8 0 0146 3M40.500 11.500A6 6 0 0146.500 6M43 12a3.500 3.500 0 013.500-3.500" stroke-width="1.200"/><circle cx="46" cy="11.500" r="1" fill="#fff" stroke="none"/><rect x="51.500" y="4.500" width="7" height="5" rx="1"/><path d="M58.500 7l2-1.500v4M51 2.500q4-2 7 0M51.500 11.500q3 2 7 0"/><rect x="76.500" y="1" width="5" height="8" rx="1" fill="#fff" stroke="none"/><path d="M75.500 8.500q3.500 3 7 0M79 10v3M77 12.500h4"/><path d="M91.500 5.500h2l2.500-2.500v8l-2.500-2.500h-2zM98 5.500q1 1.500 0 3"/><path d="M100 4q2 3 0 6M102 3q2.500 4 0 8" stroke="#aaa" stroke-width=".8"/></svg>
    <div class="ml-[2px] w-[58px] text-center text-[9px] leading-[14px] tracking-[-0.180px]">14:56<br>10/09/2022</div>
    <svg class="mr-[9px] ml-[7px] h-[20px] w-[20px]" viewBox="0 0 20 20"><path d="M2 2h12v10H8l-3 3v-3H2z" fill="#fff"/><path d="M4 4.500h8M4 7h8M4 9.500h5" stroke="#633"/><circle cx="13" cy="13.500" r="6" fill="#333" stroke="#888"/><text x="11" y="17" font-family="Open Sans" font-size="9" fill="#fff">1</text></svg>
    <i class="mr-[3px] h-full w-px bg-[#8a6a70]"></i>
  </div>
</footer>
</body>
</html>
